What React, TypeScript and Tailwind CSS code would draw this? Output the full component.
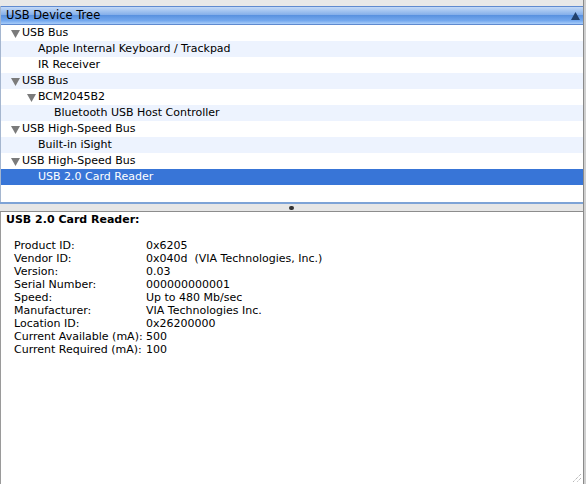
import React from "react";

type Node = { label: string; level: number; open?: boolean; selected?: boolean };

const rows: Node[] = [
    { label: "USB Bus", level: 0, open: true },
    { label: "Apple Internal Keyboard / Trackpad", level: 1 },
    { label: "IR Receiver", level: 1 },
    { label: "USB Bus", level: 0, open: true },
    { label: "BCM2045B2", level: 1, open: true },
    { label: "Bluetooth USB Host Controller", level: 2 },
    { label: "USB High-Speed Bus", level: 0, open: true },
    { label: "Built-in iSight", level: 1 },
    { label: "USB High-Speed Bus", level: 0, open: true },
    { label: "USB 2.0 Card Reader", level: 1, selected: true },
];

const details: [string, string][] = [
    ["Product ID:", "0x6205"],
    ["Vendor ID:", "0x040d  (VIA Technologies, Inc.)"],
    ["Version:", "0.03"],
    ["Serial Number:", "000000000001"],
    ["Speed:", "Up to 480 Mb/sec"],
    ["Manufacturer:", "VIA Technologies Inc."],
    ["Location ID:", "0x26200000"],
    ["Current Available (mA):", "500"],
    ["Current Required (mA):", "100"],
];

const indent = ["pl-[21px]", "pl-[37px]", "pl-[53px]"];
const arrowPos = ["left-[10px]", "left-[26px]", "left-[42px]"];

const Disclosure = ({ level }: { level: number }) => (
    <svg className={`absolute top-[5px] ${arrowPos[level]}`} width="9" height="8" viewBox="0 0 9 8">
        <path d="M0 0 L9 0 L4.5 8 Z" fill="#7b7b7b" />
    </svg>
);

export default function App() {
    return (
        <div className="w-[586px] h-[484px] overflow-hidden bg-[#e8e8e8] flex font-['DejaVu_Sans',sans-serif] text-[11px] text-black">
            <div className="w-[583px] flex flex-col pt-[6px]">
                {/* tree panel */}
                <div className="h-[196px] bg-white border-l border-[#a5b6cf] flex flex-col">
                    <div className="h-[19px] flex items-center justify-between pl-[5px] pr-[3px] border-y border-[#5f8ad0] bg-[linear-gradient(#c3d9f7,#86b0ea_45%,#5a92e0_50%,#74a8ee_80%,#a9cdf9)]">
                        <span className="leading-none text-[11.5px]">USB Device Tree</span>
                        <svg width="9" height="8" viewBox="0 0 9 8">
                            <path d="M0 8 L9 8 L4.5 0 Z" fill="#22406b" />
                        </svg>
                    </div>
                    {rows.map((r, i) => (
                        <div
                            key={i}
                            className={`relative h-[16px] leading-[16px] ${indent[r.level]} ${
                                r.selected ? "bg-[#3875d7] text-white" : i % 2 === 1 ? "bg-[#edf3fe]" : "bg-white"
                            }`}
                        >
                            {r.open && <Disclosure level={r.level} />}
                            {r.label}
                        </div>
                    ))}
                </div>
                {/* splitter */}
                <div className="h-[10px] border-t-2 border-[#7ea3d6] border-b border-b-[#8d8d8d] bg-[#e6e6e6] flex justify-center items-center">
                    <div className="w-[5px] h-[4px] rounded-full bg-[#333]" />
                </div>
                {/* detail panel */}
                <div className="relative flex-1 bg-white border-l border-[#9a9a9a] pl-[5px]">
                    <div className="font-bold leading-[15px]">USB 2.0 Card Reader:</div>
                    <div className="mt-[12px] pl-[8px] grid grid-cols-[132px_1fr] leading-[13px]">
                        {details.map(([k, v]) => (
                            <React.Fragment key={k}>
                                <span>{k}</span>
                                <span className="whitespace-pre">{v}</span>
                            </React.Fragment>
                        ))}
                    </div>
                    <svg className="absolute right-[1px] bottom-[1px]" width="12" height="12" viewBox="0 0 12 12">
                        <path d="M11 3 L3 11 M11 7 L7 11" stroke="#9a9a9a" strokeWidth="1" strokeDasharray="1 1" />
                    </svg>
                </div>
            </div>
            <div className="w-[1px] bg-[#8a8a8a]" />
            <div className="flex-1 bg-[#cfcfcf]" />
        </div>
    );
}
